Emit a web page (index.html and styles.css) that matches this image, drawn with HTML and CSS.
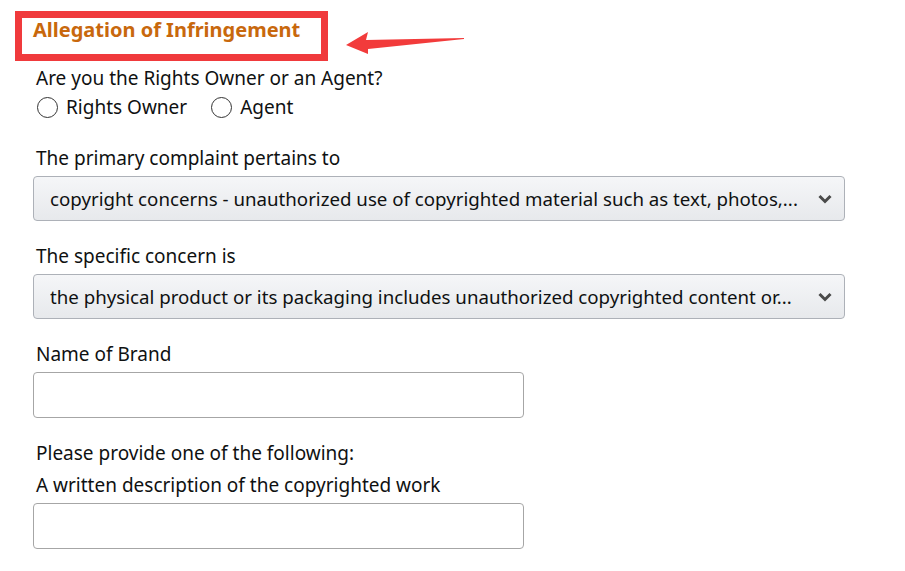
FILE: index.html
```html
<!DOCTYPE html>
<html lang="en">
<head>
  <meta charset="UTF-8" />
  <title>Allegation of Infringement</title>
  <link rel="stylesheet" href="styles.css">
</head>
<body>
  <div class="head">
    <div class="mark">
      <h2>Allegation of Infringement</h2>
    </div>
    <svg class="arrow" width="120" height="26" viewBox="0 0 120 26">
      <polygon points="0,14 22,1 20,9 118,7 118,8 22,18 22,23" fill="#f23b3b"/>
    </svg>
  </div>

  <form class="form">
    <div class="field">
      <p class="label">Are you the Rights Owner or an Agent?</p>
      <div class="radios">
        <label class="radio"><span class="dot"></span>Rights Owner</label>
        <label class="radio"><span class="dot"></span>Agent</label>
      </div>
    </div>

    <div class="field">
      <p class="label">The primary complaint pertains to</p>
      <div class="select">
        <span class="val">copyright concerns - unauthorized use of copyrighted material such as text, photos,...</span>
        <svg class="chev" width="14" height="10" viewBox="0 0 14 10"><polyline points="1.5,2 7,7.5 12.5,2" fill="none" stroke="#4a4a4a" stroke-width="3"/></svg>
      </div>
    </div>

    <div class="field">
      <p class="label">The specific concern is</p>
      <div class="select">
        <span class="val">the physical product or its packaging includes unauthorized copyrighted content or...</span>
        <svg class="chev" width="14" height="10" viewBox="0 0 14 10"><polyline points="1.5,2 7,7.5 12.5,2" fill="none" stroke="#4a4a4a" stroke-width="3"/></svg>
      </div>
    </div>

    <div class="field">
      <p class="label">Name of Brand</p>
      <input type="text" class="text">
    </div>

    <div class="field">
      <p class="label">Please provide one of the following:</p>
      <p class="label">A written description of the copyrighted work</p>
      <input type="text" class="text">
    </div>
  </form>
</body>
</html>
```

FILE: styles.css
```css
body { margin: 0; padding: 11px 0 0 15px; font-family: "Noto Sans", sans-serif; color: #0f1111; background: #fff; }
.head { display: flex; align-items: flex-start; }
.mark { width: 288px; height: 34px; border: 7px solid #f03a3c; padding: 2px 0 0 11px; }
.mark h2 { margin: 0; font-size: 20px; font-weight: 700; color: #c8680d; line-height: 20px; }
.arrow { margin: 20px 0 0 18px; }
.form { padding: 1px 0 0 18px; width: 812px; }
.field { margin-bottom: 19px; }
.field:first-child { margin-bottom: 20px; }
.label { margin: 0 0 0 3px; font-size: 19px; line-height: 32px; }
.radios { display: flex; gap: 23px; padding: 1px 0 3px 3px; }
.radio { display: flex; align-items: center; font-size: 19px; line-height: 24px; }
.dot { width: 19px; height: 19px; border: 1px solid #333; border-radius: 50%; margin: 0 8px 0 1px; }
.select { margin-top: 2px; height: 43px; border: 1px solid #adb1b8; border-radius: 4px; background: linear-gradient(#f5f6f8, #e7e9ec); display: flex; align-items: center; padding: 0 12px 0 16px; }
.val { flex: 1; font-size: 18.7px; white-space: nowrap; overflow: hidden; }
.chev { margin-left: 8px; }
.text { display: block; margin-top: 2px; width: 491px; height: 46px; box-sizing: border-box; border: 1px solid #a6a6a6; border-radius: 4px; }
```
